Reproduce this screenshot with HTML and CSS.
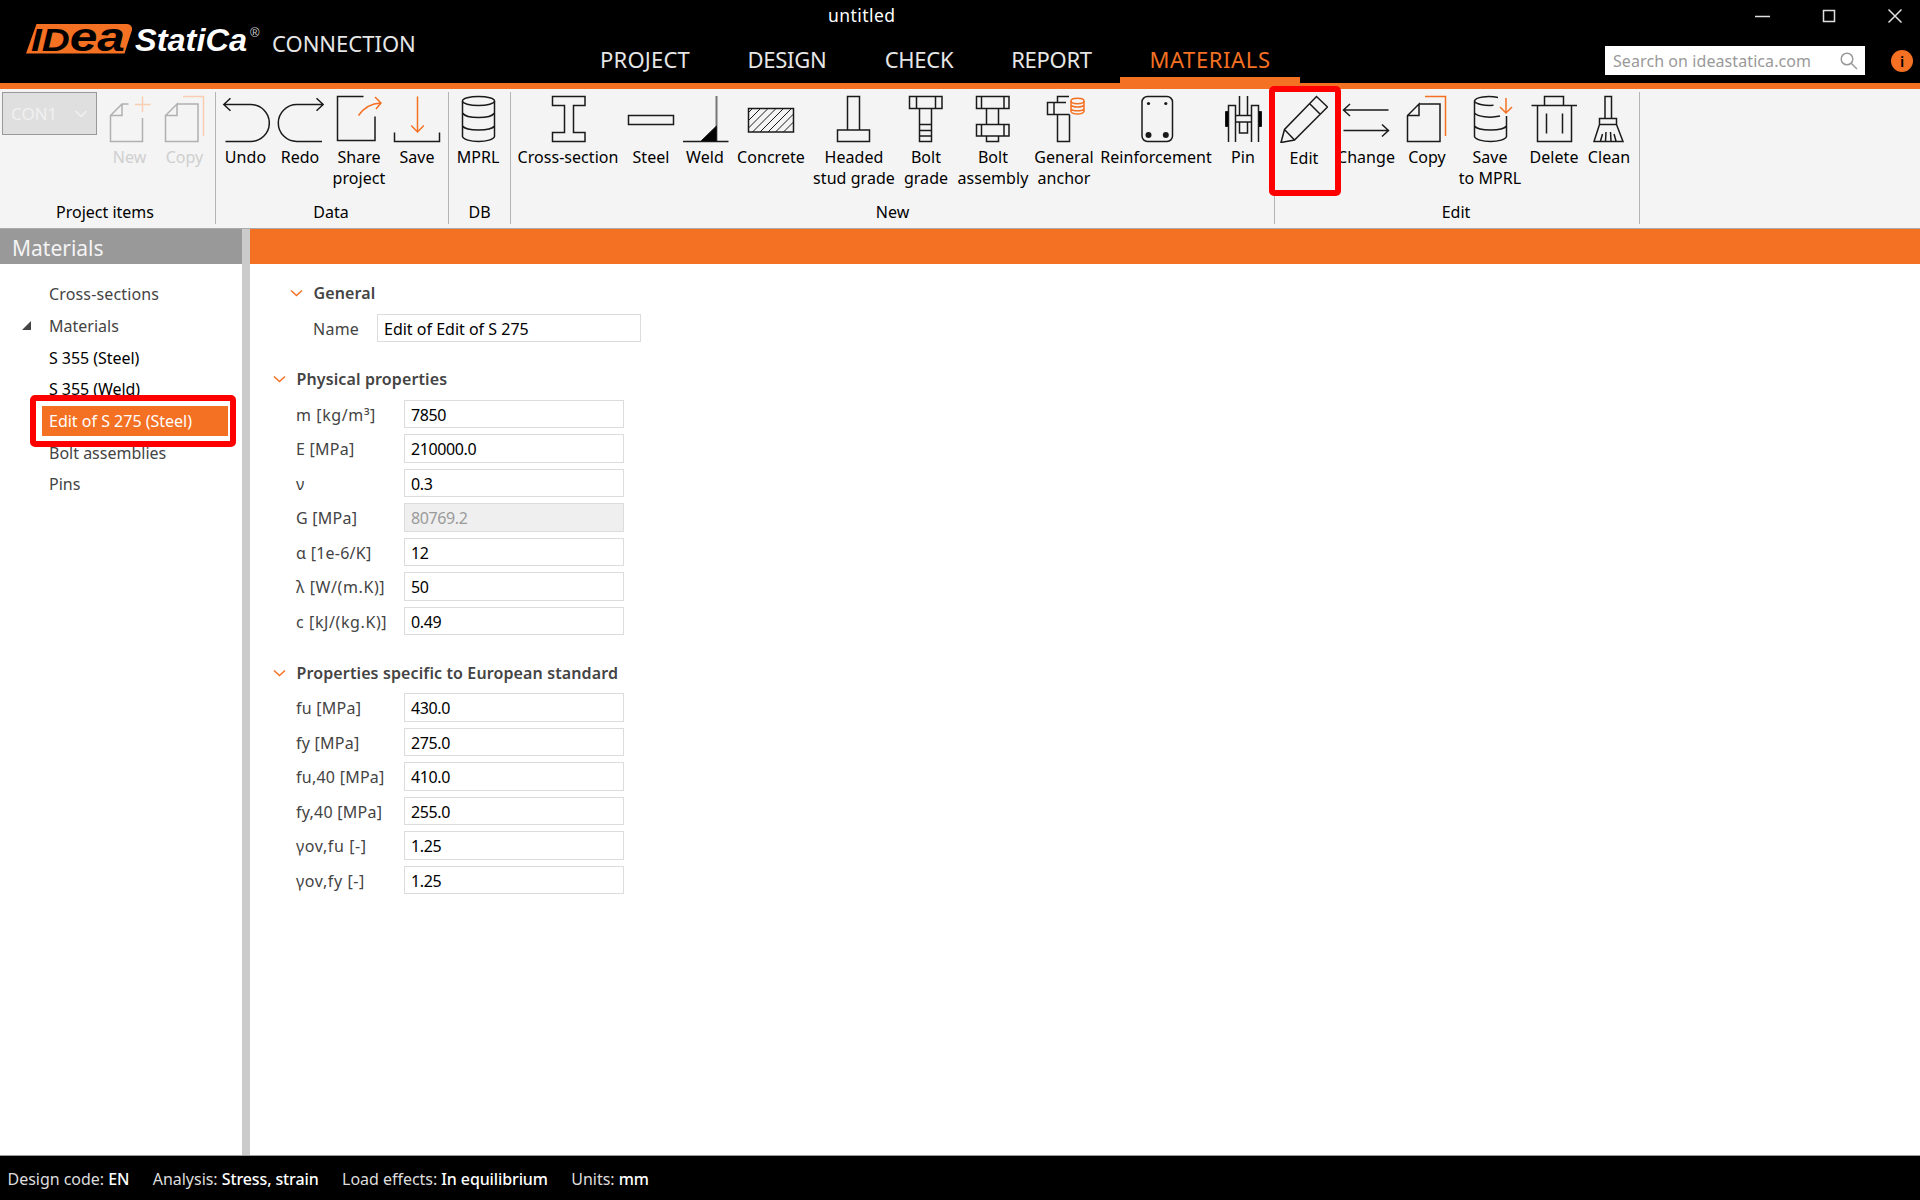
FILE: index.html
```html
<!DOCTYPE html>
<html lang="en">
<head>
    <meta charset="UTF-8">
    <meta name="viewport" content="width=device-width, initial-scale=1.0">
    <title>IDEA StatiCa Connection - untitled</title>
    <link rel="stylesheet" href="styles.css">
</head>
<body>
    <header class="header">
        <div class="brand">
            <svg class="logo" width="240" height="59" viewBox="0 -9 240 59">
                <path class="logo-plate" d="M10.500 5H101a5 5 0 0 1 5 6L98.500 34.500H0z"/>
                <text class="logo-idea" x="5" y="31.500" textLength="94" lengthAdjust="spacingAndGlyphs">ID<tspan class="logo-tall">ea</tspan></text>
                <text class="logo-statica" x="109" y="32" textLength="112" lengthAdjust="spacingAndGlyphs">StatiCa</text>
                <text class="logo-reg" x="224" y="18">®</text>
            </svg>
            <span class="product">CONNECTION</span>
        </div>
        <div class="center">
            <div class="doc-title">untitled</div>
            <nav class="tabs">
                <a class="tab tab-project">PROJECT</a>
                <a class="tab tab-design">DESIGN</a>
                <a class="tab tab-check">CHECK</a>
                <a class="tab tab-report">REPORT</a>
                <a class="tab tab-materials active">MATERIALS</a>
            </nav>
        </div>
        <div class="window-side">
            <div class="window-buttons">
                <svg width="16" height="16" viewBox="0 0 16 16"><path d="M0 8.500H15"/></svg>
                <svg width="16" height="16" viewBox="0 0 16 16"><path d="M2.500 2.500h11v11h-11z"/></svg>
                <svg width="16" height="16" viewBox="0 0 16 16"><path d="M1.500 1.500l13 13M14.500 1.500l-13 13"/></svg>
            </div>
            <div class="search-row">
                <div class="search">
                    <span>Search on ideastatica.com</span>
                    <svg width="18" height="18" viewBox="0 0 18 18"><circle cx="7" cy="7" r="5.800"/><path d="M11 11l6 6"/></svg>
                </div>
                <div class="info">i</div>
            </div>
        </div>
    </header>

    <section class="ribbon">
        <div class="group group-items">
            <div class="tools">
                <div class="combo"><span>CON1</span><svg width="14" height="8" viewBox="0 0 14 8"><path d="M1.500 1l5.500 5.500L12.500 1"/></svg></div>
                <div class="tool w-55 disabled">
                    <svg class="icon" viewBox="0 0 48 48"><path d="M22.500 9h-6.500L4.500 20.500v26h32V23M16 9v11.500H4.500"/><path class="accent" d="M29 9.500h15.500M36.500 1.500v15.500"/></svg>
                    <span>New</span>
                </div>
                <div class="tool w-55 disabled">
                    <svg class="icon" viewBox="0 0 48 48"><path d="M16 9h21v37.500H4.500v-26L16 9v11.500H4.500"/><path class="accent" d="M22 1.500h20.500V41"/></svg>
                    <span>Copy</span>
                </div>
            </div>
            <div class="group-name">Project items</div>
        </div>

        <div class="group group-data">
            <div class="tools">
                <div class="tool w-53">
                    <svg class="icon" viewBox="0 0 48 48"><path d="M1.500 9.500H28.800a18.500 18.500 0 0 1 0 37H3.500M8.500 3.300L1.800 9.500l6.700 6.200"/></svg>
                    <span>Undo</span>
                </div>
                <div class="tool w-56">
                    <svg class="icon" viewBox="0 0 48 48"><path d="M47 9.500H20.800a18.500 18.500 0 0 0 0 37H46M40.500 3.300l6.700 6.200-6.700 6.200"/></svg>
                    <span>Redo</span>
                </div>
                <div class="tool w-62">
                    <svg class="icon" viewBox="0 0 48 48"><path d="M28.500 1.500h-26v44h37.500V21.500"/><path class="accent" d="M23.500 20.500C28.500 13 36 8.500 46 8M40 2l6 6-5 6"/></svg>
                    <span>Share<br>project</span>
                </div>
                <div class="tool w-54">
                    <svg class="icon" viewBox="0 0 48 48"><path d="M1.500 37.500v9h45v-9"/><path class="accent" d="M24.500 1.500V37M18.200 30.500l6.300 6.500 6.300-6.500"/></svg>
                    <span>Save</span>
                </div>
            </div>
            <div class="group-name">Data</div>
        </div>

        <div class="group group-db">
            <div class="tools">
                <div class="tool w-58">
                    <svg class="icon" viewBox="0 0 48 48"><ellipse cx="24.500" cy="6" rx="16" ry="4.500"/><path d="M8.500 6v35.500c1 3 8 5 16 5s15-2 16-5V6M8.500 18c2 3 8 4.500 16 4.500s14-1.500 16-4.500M8.500 31c2 2.800 8 4 16 4s14-1.200 16-4"/></svg>
                    <span>MPRL</span>
                </div>
            </div>
            <div class="group-name">DB</div>
        </div>

        <div class="group group-new">
            <div class="tools">
                <div class="tool w-110">
                    <svg class="icon" viewBox="0 0 48 48"><path d="M8.500 1.500h32.500v9H29.500v27H41v9H8.500v-9h12v-27h-12z"/></svg>
                    <span>Cross-section</span>
                </div>
                <div class="tool w-56">
                    <svg class="icon" viewBox="0 0 48 48"><path d="M1.500 20.500h45v9h-45z"/></svg>
                    <span>Steel</span>
                </div>
                <div class="tool w-52">
                    <svg class="icon" viewBox="0 0 48 48"><path class="gray" d="M35.500 1v45"/><path class="solid" d="M19.500 46.500L35.500 31v15.500z"/><path d="M2 46.500h45.500"/></svg>
                    <span>Weld</span>
                </div>
                <div class="tool w-80">
                    <svg class="icon" viewBox="0 0 48 48"><path d="M1.500 13.500h45V37h-45z"/><path class="thin" d="M1.500 17.500l4-4M1.500 25.500l12-12M1.500 33l19.500-19.500M5.500 37L29 13.500M13 37l23.500-23.500M21 37l23.500-23.500M28.500 37l18-18M36.500 37l10-10"/></svg>
                    <span>Concrete</span>
                </div>
                <div class="tool w-86">
                    <svg class="icon" viewBox="0 0 48 48"><path d="M17.500 35V1.500h12V35M7.500 35h32v11.500h-32z"/></svg>
                    <span>Headed<br>stud grade</span>
                </div>
                <div class="tool w-58">
                    <svg class="icon" viewBox="0 0 48 48"><path d="M7.500 1.500H40v12H7.500zM14.500 1.500v12M33.500 1.500v12M17.500 13.500v33h12v-33M17.500 29.500h12M17.500 35.500h12M17.500 41h12"/></svg>
                    <span>Bolt<br>grade</span>
                </div>
                <div class="tool w-76">
                    <svg class="icon" viewBox="0 0 48 48"><path d="M7.500 1.500H40v12H7.500zM12.500 1.500v12M35 1.500v12M17.500 13.500v15.500M29.500 13.500v15.500M7.500 29.500H40V41H7.500zM12.500 29.500V41M35 29.500V41M17.500 41v5.500h12V41"/></svg>
                    <span>Bolt<br>assembly</span>
                </div>
                <div class="tool w-66">
                    <svg class="icon" viewBox="0 0 48 48"><path d="M29 1.500H17.500v6M26 7.500H7.500v12h22M14 7.500v12M17.500 19.500v27h12v-27"/><g class="accent"><ellipse cx="37.500" cy="6" rx="6.500" ry="2.700"/><path d="M31 6v10.500c.8 1.700 3.300 2.500 6.500 2.500s5.700-.8 6.500-2.500V6M31 10c1 1.500 3.500 2 6.500 2s5.500-.5 6.500-2M31 14c1 1.300 3.500 1.800 6.500 1.800s5.500-.5 6.500-1.800"/></g></svg>
                    <span>General<br>anchor</span>
                </div>
                <div class="tool w-118">
                    <svg class="icon" viewBox="0 0 48 48"><rect x="10" y="1.500" width="30.500" height="45" rx="5.500"/><circle class="dot" cx="16.500" cy="8.500" r="1.600"/><circle class="dot" cx="33.800" cy="8.500" r="1.600"/><circle class="dot" cx="16.500" cy="40" r="3"/><circle class="dot" cx="33.800" cy="40" r="3"/></svg>
                    <span>Reinforcement</span>
                </div>
                <div class="tool w-56">
                    <svg class="icon" viewBox="0 0 48 48"><path d="M9.500 47V10.500h7V47M32.500 47V10.500h7V47M20.500 1v19M28.500 1v19M16.500 20.500h16M16.500 27h16M20.500 27v11h8V27"/><path class="solid" d="M6.500 16.500h3v15h-3zM39.500 16.500h3v15h-3z"/></svg>
                    <span>Pin</span>
                </div>
            </div>
            <div class="group-name">New</div>
        </div>

        <div class="group group-edit">
            <div class="tools">
                <div class="tool w-54 marked">
                    <svg class="icon" viewBox="0 0 48 48"><path d="M1 47.500l3.500-13 32-33L47.500 12l-33 33zM29.500 8.500l10.500 10.500M4.500 34.500l10 10.500"/></svg>
                    <span>Edit</span>
                </div>
                <div class="tool w-70">
                    <svg class="icon" viewBox="0 0 48 48"><path d="M46.500 15H1.500M8 9l-6.500 6L8 21M1.500 35.500h45M40 29.500l6.500 6-6.500 6"/></svg>
                    <span>Change</span>
                </div>
                <div class="tool w-52">
                    <svg class="icon" viewBox="0 0 48 48"><path d="M16 9h21v37.500H4.500v-26L16 9v11.500H4.500"/><path class="accent" d="M22 1.500h20.500V41"/></svg>
                    <span>Copy</span>
                </div>
                <div class="tool w-74">
                    <svg class="icon" viewBox="0 0 48 48"><path d="M32 2.500C22 .500 9.500 2 8.500 6v35.500c1 3 8 5 16 5s15-2 16-5V21M8.500 6c1 3 9 4.800 19 4.300M8.500 18c3 3.500 15 5.500 25.500 3M8.500 31c2 2.800 8 4 16 4s14-1.200 16-4"/><path class="accent" d="M40 3v15M34 12l6 6 6-6"/></svg>
                    <span>Save<br>to MPRL</span>
                </div>
                <div class="tool w-54">
                    <svg class="icon" viewBox="0 0 48 48"><path d="M1.500 10.500H47M14.500 10.500v-9h19v9M7.500 10.500v36h34v-36M16.500 18.500v20M32.500 18.500v20"/></svg>
                    <span>Delete</span>
                </div>
                <div class="tool w-56">
                    <svg class="icon" viewBox="0 0 48 48"><path d="M20 23.500v-22h6.500v22M14.500 23.500h17v6h-17zM14.500 29.500l-5.500 17h29l-6.500-17M15.500 46l2-7M20.500 46l.5-9M26 46l-.5-9M31 46l-2-7"/></svg>
                    <span>Clean</span>
                </div>
            </div>
            <div class="group-name">Edit</div>
        </div>
    </section>

    <main class="main">
        <aside class="sidebar">
            <h2 class="sidebar-title">Materials</h2>
            <ul class="tree">
                <li>Cross-sections</li>
                <li class="expanded"><svg class="arrow" width="9" height="9" viewBox="0 0 9 9"><path d="M9 0v9H0z"/></svg>Materials</li>
                <li class="item">S 355 (Steel)</li>
                <li class="item">S 355 (Weld)</li>
                <li class="selected"><span>Edit of S 275 (Steel)</span></li>
                <li>Bolt assemblies</li>
                <li>Pins</li>
            </ul>
        </aside>
        <div class="splitter"></div>
        <section class="content">
            <div class="content-bar"></div>
            <div class="form">
                <div class="block general">
                    <h3><svg width="13" height="8" viewBox="0 0 13 8"><path d="M1 1.500l5.500 5L12 1.500"/></svg>General</h3>
                    <div class="row"><label>Name</label><div class="field">Edit of Edit of S 275</div></div>
                </div>
                <div class="block">
                    <h3><svg width="13" height="8" viewBox="0 0 13 8"><path d="M1 1.500l5.500 5L12 1.500"/></svg>Physical properties</h3>
                    <div class="row"><label class="wide">m [kg/m³]</label><div class="field number">7850</div></div>
                    <div class="row"><label>E [MPa]</label><div class="field number">210000.0</div></div>
                    <div class="row"><label>ν</label><div class="field number">0.3</div></div>
                    <div class="row"><label>G [MPa]</label><div class="field number readonly">80769.2</div></div>
                    <div class="row"><label>α [1e-6/K]</label><div class="field number">12</div></div>
                    <div class="row"><label class="wide">λ [W/(m.K)]</label><div class="field number">50</div></div>
                    <div class="row"><label class="wide">c [kJ/(kg.K)]</label><div class="field number">0.49</div></div>
                </div>
                <div class="block">
                    <h3><svg width="13" height="8" viewBox="0 0 13 8"><path d="M1 1.500l5.500 5L12 1.500"/></svg>Properties specific to European standard</h3>
                    <div class="row"><label>fu [MPa]</label><div class="field number">430.0</div></div>
                    <div class="row"><label>fy [MPa]</label><div class="field number">275.0</div></div>
                    <div class="row"><label>fu,40 [MPa]</label><div class="field number">410.0</div></div>
                    <div class="row"><label>fy,40 [MPa]</label><div class="field number">255.0</div></div>
                    <div class="row"><label class="wide">γov,fu [-]</label><div class="field number">1.25</div></div>
                    <div class="row"><label class="wide">γov,fy [-]</label><div class="field number">1.25</div></div>
                </div>
            </div>
        </section>
    </main>

    <footer class="status">
        <div>Design code: <b>EN</b></div>
        <div>Analysis: <b>Stress, strain</b></div>
        <div>Load effects: <b>In equilibrium</b></div>
        <div>Units: <b>mm</b></div>
    </footer>
</body>
</html>
```
FILE: styles.css
```css
*,
*::before {
    box-sizing: border-box;
}
body {
    margin: 0;
    height: 1200px;
    display: flex;
    flex-direction: column;
    overflow: hidden;
    font-family: "Noto Sans", "Open Sans", sans-serif;
    font-size: 16px;
    color: #000;
    background: #fff;
}
h2, h3, ul {
    margin: 0;
    padding: 0;
}
svg {
    display: block;
    fill: none;
    flex: none;
}

/* header */
.header {
    height: 89px;
    flex: none;
    display: flex;
    background: #000;
    border-bottom: 6px solid #f47023;
    color: #e6e6e6;
}
.brand {
    width: 571px;
    display: flex;
    padding: 10px 0 0 26px;
}
.logo-plate {
    fill: #f47023;
}
.logo-idea {
    font: italic bold 32px "Liberation Sans", sans-serif;
    fill: #000;
}
.logo-tall {
    font-size: 41px;
}
.logo-statica {
    font: italic bold 31px "Liberation Sans", sans-serif;
    fill: #fff;
}
.logo-reg {
    font: 13px "Liberation Sans", sans-serif;
    fill: #ccc;
}
.product {
    margin-left: 6px;
    font-size: 22px;
    line-height: 67px;
}
.center {
    width: 729px;
    display: flex;
    flex-direction: column;
}
.doc-title {
    height: 30px;
    padding-left: 257px;
    font-size: 17.5px;
    letter-spacing: 0.45px;
    line-height: 30px;
    color: #fff;
}
.tabs {
    height: 53px;
    display: flex;
}
.tab {
    text-align: center;
    font-size: 22px;
    line-height: 58px;
}
.tab-project { width: 148px; letter-spacing: 0.2px; }
.tab-design { width: 136px; letter-spacing: -0.3px; }
.tab-check { width: 128px; letter-spacing: -0.3px; }
.tab-report { width: 137px; letter-spacing: -0.3px; }
.tab-materials { width: 180px; letter-spacing: 0.6px; }
.tab.active {
    color: #f47023;
    border-bottom: 6px solid #f47023;
}
.window-side {
    flex: 1;
}
.window-buttons {
    height: 46px;
    display: flex;
    justify-content: flex-end;
    gap: 50px;
    padding: 8px 17px 0 0;
}
.window-buttons svg {
    stroke: #e0e0e0;
    stroke-width: 1.5;
}
.search-row {
    display: flex;
    align-items: center;
    justify-content: flex-end;
    gap: 26px;
    padding-right: 7px;
}
.search {
    width: 260px;
    height: 29px;
    display: flex;
    align-items: center;
    justify-content: space-between;
    padding: 0 7px 0 8px;
    background: #fff;
    color: #999;
    letter-spacing: 0.08px;
}
.search svg {
    stroke: #999;
    stroke-width: 1.5;
}
.info {
    width: 22px;
    height: 22px;
    border-radius: 50%;
    background: #f47023;
    color: #000;
    font-size: 15px;
    font-weight: 600;
    line-height: 22px;
    text-align: center;
}

/* ribbon */
.ribbon {
    height: 140px;
    flex: none;
    display: flex;
    padding: 3px 0 4px;
    background: #f4f4f4;
    border-bottom: 1px solid #aaa;
}
.group {
    display: flex;
    flex-direction: column;
    border-right: 1px solid #b4b4b4;
}
.group-items { width: 216px; }
.group-data { width: 233px; }
.group-db { width: 62px; }
.group-new { width: 764px; }
.group-edit { width: 365px; }
.tools {
    height: 112px;
    display: flex;
}
.group-items .tools { padding-left: 2px; }
.group-data .tools { padding-left: 3px; }
.group-new .tools { padding-left: 2px; }
.group-edit .tools { padding-left: 2px; }
.group-name {
    padding-right: 2px;
    line-height: 23px;
    text-align: center;
}
.group-items .group-name { padding-right: 5px; }
.group-new .group-name,
.group-db .group-name { padding-right: 0; }
.tool {
    flex: none;
    display: flex;
    flex-direction: column;
    align-items: center;
    padding-top: 3px;
    text-align: center;
    line-height: 21.5px;
    letter-spacing: 0.05px;
    white-space: nowrap;
}
.icon {
    width: 48px;
    height: 48px;
    margin-bottom: 3.5px;
    stroke: #1a1a1a;
    stroke-width: 1.5;
}
.icon .accent { stroke: #f47023; }
.icon .thin { stroke-width: 1; }
.icon .gray { stroke: #777; stroke-width: 2; }
.icon .solid { fill: #000; stroke-width: 1; }
.icon .dot { fill: #1a1a1a; stroke: none; }
.disabled {
    color: #cfcfcf;
}
.disabled .icon { stroke: #b0b0b0; }
.disabled .icon .accent { stroke: #f9cdb2; }
.w-52 { width: 52px; }
.w-53 { width: 53px; }
.w-54 { width: 54px; }
.w-55 { width: 55px; }
.w-56 { width: 56px; }
.w-58 { width: 58px; }
.w-62 { width: 62px; }
.w-66 { width: 66px; }
.w-70 { width: 70px; }
.w-74 { width: 74px; }
.w-76 { width: 76px; }
.w-80 { width: 80px; }
.w-86 { width: 86px; }
.w-110 { width: 110px; }
.w-118 { width: 118px; }
.combo {
    width: 95px;
    height: 43px;
    margin-right: 5px;
    display: flex;
    align-items: center;
    justify-content: space-between;
    padding: 0 8px;
    border: 1px solid #999;
    background: #dfdfdf;
    color: #f0f0f0;
    font-size: 17px;
}
.combo svg {
    stroke: #f0f0f0;
    stroke-width: 1.5;
}

/* red frames over the edited tool and tree item */
.marked,
.selected {
    position: relative;
    z-index: 1;
}
.marked::before,
.selected::before {
    content: "";
    position: absolute;
    z-index: -1;
    border: 6px solid #ff0000;
    border-radius: 5px;
}
.marked::before {
    top: -6px;
    left: -8px;
    width: 72px;
    height: 110px;
    background: #f4f4f4;
}
.marked span {
    padding-top: 1px;
}

/* body */
.main {
    flex: 1;
    display: flex;
}
.sidebar {
    width: 242px;
}
.sidebar-title {
    height: 35px;
    padding-left: 12px;
    background: #999;
    color: #f4f4f4;
    font-size: 21px;
    font-weight: normal;
    line-height: 38px;
}
.tree {
    padding-top: 14.5px;
    list-style: none;
    color: #444;
}
.tree li {
    height: 31.65px;
    display: flex;
    align-items: center;
    padding-left: 49px;
}
.tree li:first-child {
    letter-spacing: 0.15px;
}
.tree .expanded {
    padding-left: 22px;
}
.tree .arrow {
    margin-right: 18px;
    fill: #444;
}
.tree .item {
    color: #000;
    letter-spacing: -0.05px;
}
.tree .selected {
    padding-left: 42px;
}
.selected span {
    width: 186px;
    height: 30px;
    padding-left: 7px;
    background: #f47023;
    color: #fff;
    line-height: 30px;
}
.selected::before {
    top: -10px;
    left: 30px;
    width: 206px;
    height: 52px;
    background: #fff;
}
.splitter {
    width: 8px;
    background: #cbcbcb;
}
.content {
    flex: 1;
}
.content-bar {
    height: 35px;
    background: #f47023;
}
.form {
    padding: 17px 0 0 23px;
}
.block {
    margin-bottom: 25.5px;
}
.block.general {
    padding-left: 17px;
    margin-bottom: 25px;
}
.block h3 {
    height: 24px;
    display: flex;
    align-items: center;
    gap: 10.5px;
    font-size: 16px;
    font-weight: 600;
    letter-spacing: 0.12px;
    color: #444;
}
.block h3 svg {
    stroke: #f47023;
    stroke-width: 1.5;
}
.row {
    height: 28.5px;
    display: flex;
    align-items: center;
    margin: 8.5px 0 6px 23px;
}
.row + .row {
    margin-top: 6px;
}
.row label {
    width: 108px;
    padding-top: 2px;
    color: #444;
    letter-spacing: 0.25px;
}
.row label.wide {
    letter-spacing: 0.6px;
}
.general .row label {
    width: 64px;
}
.field {
    width: 220px;
    height: 28.5px;
    padding-left: 6px;
    border: 1px solid #dcdcdc;
    line-height: 28px;
}
.number {
    letter-spacing: -0.4px;
}
.general .field {
    width: 264px;
}
.readonly {
    background: #efefef;
    color: #9a9a9a;
}

/* status bar */
.status {
    height: 45px;
    flex: none;
    display: flex;
    gap: 23.5px;
    padding-left: 7.5px;
    background: #000;
    border-top: 1px solid #999;
    color: #ddd;
    letter-spacing: -0.03px;
    line-height: 46px;
}
.status b {
    font-weight: 500;
    letter-spacing: -0.12px;
    color: #fff;
}
```
